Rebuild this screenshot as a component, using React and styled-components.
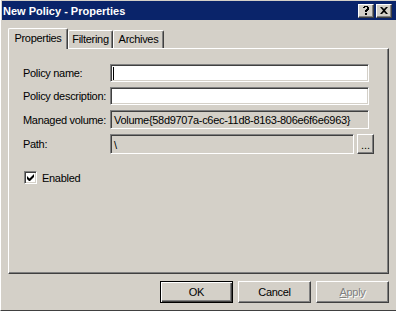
import React from 'react'
import styled, { createGlobalStyle } from 'styled-components'

const Global = createGlobalStyle`
html,body{margin:0;padding:0;background:#d4d0c8;}
*{box-sizing:border-box;}
`
const Window = styled.div`
width:396px;
height:311px;
background:#d4d0c8;
border-left:1px solid #fff;
border-bottom:1px solid #404040;
padding:1px 0 0 1px;
display:flex;
flex-direction:column;
font-family:"Liberation Sans",Arial,sans-serif;
font-size:11px;
letter-spacing:-0.3px;
color:#000;
`
const TitleBar = styled.div`
height:19px;
background:#0a246a;
display:flex;
align-items:center;
padding:0 4px 0 1px;
`
const Title = styled.span`
flex:1;
color:#fff;
font-weight:bold;
font-size:11px;
letter-spacing:0;
`
const CapButton = styled.div`
width:16px;
height:14px;
margin-left:${p=>p.$gap||0}px;
background:#d4d0c8;
border:1px solid;
border-color:#fff #404040 #404040 #fff;
box-shadow:inset -1px -1px #808080;
display:flex;
align-items:center;
justify-content:center;
`
const Body = styled.div`
flex:1;
display:flex;
flex-direction:column;
padding:8px 7px 0 6px;
`
const TabStrip = styled.div`
display:flex;
align-items:flex-end;
height:20px;
`
const Tab = styled.div`
position:relative;
z-index:${p=>p.$active?2:1};
height:${p=>p.$active?21:18}px;
margin-bottom:${p=>p.$active?-1:0}px;
width:${p=>p.$w}px;
background:#d4d0c8;
border-top:1px solid #fff;
border-left:1px solid #fff;
border-right:1px solid #404040;
box-shadow:inset -1px 0 #808080;
border-radius:2px 2px 0 0;
padding-top:${p=>p.$active?3:2}px;
text-align:center;
`
const Panel = styled.div`
height:226px;
border:1px solid;
border-color:#fff #404040 #404040 #fff;
box-shadow:inset -1px -1px #808080;
padding:15px 0 0 14px;
`
const Form = styled.div`
display:grid;
grid-template-columns:87px 259px;
row-gap:5px;
align-items:center;
`
const Label = styled.span`
white-space:nowrap;
`
const Field = styled.div`
height:${p=>p.$h||18}px;
width:${p=>p.$w?p.$w+'px':'auto'};
background:${p=>p.$ro?'#d4d0c8':'#fff'};
border:1px solid;
border-color:#808080 #fff #fff #808080;
box-shadow:inset 1px 1px #404040, inset -1px -1px #d4d0c8;
padding:1px 0 0 3px;
white-space:nowrap;
overflow:hidden;
display:flex;
align-items:center;
`
const Caret = styled.span`
width:1px;
height:13px;
background:#000;
margin-left:-1px;
`
const PathCell = styled.div`
display:flex;
gap:3px;
width:264px;
`
const Browse = styled.div`
width:17px;
height:20px;
border:1px solid;
border-color:#fff #404040 #404040 #fff;
box-shadow:inset -1px -1px #808080;
display:flex;
align-items:flex-end;
justify-content:center;
padding-bottom:4px;
font-size:11px;
line-height:8px;
letter-spacing:0;
`
const CheckRow = styled.label`
display:flex;
align-items:center;
gap:5px;
margin:17px 0 0 1px;
`
const Box = styled.div`
width:13px;
height:13px;
background:#fff;
border:1px solid;
border-color:#808080 #fff #fff #808080;
box-shadow:inset 1px 1px #404040, inset -1px -1px #d4d0c8;
display:flex;
align-items:center;
justify-content:center;
`
const Footer = styled.div`
display:flex;
justify-content:flex-end;
gap:5px;
padding-top:7px;
`
const Button = styled.div`
width:73px;
height:22px;
display:flex;
align-items:center;
justify-content:center;
border:1px solid;
border-color:${p=>p.$def?'#000':'#fff #404040 #404040 #fff'};
box-shadow:${p=>p.$def?'inset 1px 1px #fff, inset -1px -1px #404040, inset -2px -2px #808080':'inset -1px -1px #808080'};
color:${p=>p.$disabled?'#808080':'#000'};
text-shadow:${p=>p.$disabled?'1px 1px #fff':'none'};
`

const App = () => {
  return (
    <Window>
      <Global/>
      <TitleBar>
        <Title>New Policy - Properties</Title>
        <CapButton>
          <svg width="8" height="9" viewBox="0 0 8 9"><path d="M1 1h1V0h4v1h1v3H6v1H5v1H3V4h1V3h1V1H3v1H1z M3 7h2v2H3z" fill="#000"/></svg>
        </CapButton>
        <CapButton $gap={2}>
          <svg width="8" height="7" viewBox="0 0 8 7"><path d="M0 0h2l2 2 2-2h2L5 3.5 8 7H6L4 5 2 7H0l3-3.5z" fill="#000"/></svg>
        </CapButton>
      </TitleBar>
      <Body>
        <TabStrip>
          <Tab $active $w={60}>Properties</Tab>
          <Tab $w={45}>Filtering</Tab>
          <Tab $w={51}>Archives</Tab>
        </TabStrip>
        <Panel>
          <Form>
            <Label>Policy name:</Label>
            <Field><Caret/></Field>
            <Label>Policy description:</Label>
            <Field/>
            <Label>Managed volume:</Label>
            <Field $ro $h={19}>Volume{'{'}58d9707a-c6ec-11d8-8163-806e6f6e6963{'}'}</Field>
            <Label>Path:</Label>
            <PathCell>
              <Field $ro $h={20} $w={244}>\</Field>
              <Browse>...</Browse>
            </PathCell>
          </Form>
          <CheckRow>
            <Box>
              <svg width="7" height="7" viewBox="0 0 7 7"><path d="M0 2v3l2 2h1l4-4V0L2.5 4.5z" fill="#000"/></svg>
            </Box>
            Enabled
          </CheckRow>
        </Panel>
        <Footer>
          <Button $def>OK</Button>
          <Button>Cancel</Button>
          <Button $disabled><u>A</u>pply</Button>
        </Footer>
      </Body>
    </Window>
  )
}

export default App
